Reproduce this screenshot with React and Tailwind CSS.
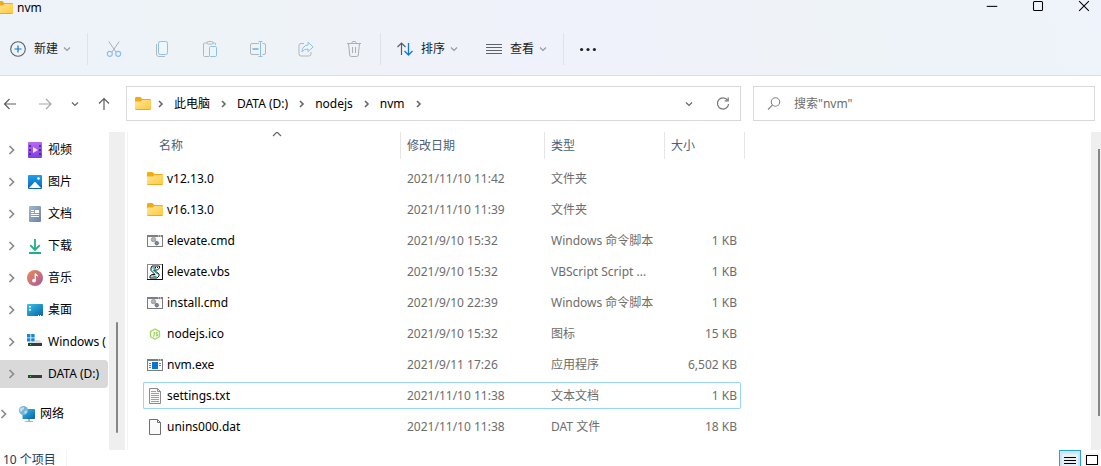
import React, { useState } from 'react';

const places = [
  { label: '视频', icon: VideoIcon },
  { label: '图片', icon: PictureIcon },
  { label: '文档', icon: DocumentIcon },
  { label: '下载', icon: DownloadIcon },
  { label: '音乐', icon: MusicIcon },
  { label: '桌面', icon: DesktopIcon },
  { label: 'Windows (', icon: WindowsDriveIcon },
  { label: 'DATA (D:)', icon: DriveIcon, active: true },
];

const files = [
  { name: 'v12.13.0', date: '2021/11/10 11:42', type: '文件夹', size: '', icon: FolderIcon },
  { name: 'v16.13.0', date: '2021/11/10 11:39', type: '文件夹', size: '', icon: FolderIcon },
  { name: 'elevate.cmd', date: '2021/9/10 15:32', type: 'Windows 命令脚本', size: '1 KB', icon: CmdIcon },
  { name: 'elevate.vbs', date: '2021/9/10 15:32', type: 'VBScript Script ...', size: '1 KB', icon: VbsIcon },
  { name: 'install.cmd', date: '2021/9/10 22:39', type: 'Windows 命令脚本', size: '1 KB', icon: CmdIcon },
  { name: 'nodejs.ico', date: '2021/9/10 15:32', type: '图标', size: '15 KB', icon: NodeIcon },
  { name: 'nvm.exe', date: '2021/9/11 17:26', type: '应用程序', size: '6,502 KB', icon: ExeIcon },
  { name: 'settings.txt', date: '2021/11/10 11:38', type: '文本文档', size: '1 KB', icon: TextFileIcon },
  { name: 'unins000.dat', date: '2021/11/10 11:38', type: 'DAT 文件', size: '18 KB', icon: BlankFileIcon },
];

const crumbs = ['此电脑', 'DATA (D:)', 'nodejs', 'nvm'];

function Icon({ children, className = 'size-4' }) {
  return (
    <svg viewBox="0 0 16 16" fill="none" aria-hidden="true" className={`block shrink-0 ${className}`}>
      {children}
    </svg>
  );
}

function FolderIcon() {
  return (
    <Icon>
      <defs>
        <linearGradient id="folder" x1="0" y1="0" x2="1" y2="1">
          <stop offset="0" stopColor="#ffe49a" />
          <stop offset="1" stopColor="#ffc937" />
        </linearGradient>
      </defs>
      <path d="M0 2.2Q0 1 1.2 1H5.4L7.4 3H14.8Q16 3 16 4.2V8H0Z" fill="#f3ab12" />
      <path d="M0 5.4H5.6L7.4 4H15Q16 4 16 5V12.8Q16 14 14.8 14H1.2Q0 14 0 12.8Z" fill="url(#folder)" />
      <path d="M.5 13.5H15.5" stroke="#e9ab25" />
    </Icon>
  );
}

function CmdIcon() {
  return (
    <Icon>
      <rect x=".5" y="2.5" width="15" height="11" fill="#fafafa" stroke="#7d7d7d" />
      <path d="M0 3H16" stroke="#7d7d7d" strokeWidth="2" />
      <path d="M11 3H12M13 3H14" stroke="#fff" />
      <circle cx="6.5" cy="6.5" r="1.8" stroke="#9aa1a8" strokeWidth="1.6" />
      <path d="M6.5 3.8V9.2M3.8 6.5H9.2" stroke="#aeb4ba" strokeWidth=".8" />
      <circle cx="9.8" cy="10.2" r="1.4" fill="#fff" stroke="#707880" strokeWidth="1.4" />
      <path d="M9.8 7.8V12.6M7.4 10.2H12.2" stroke="#707880" strokeWidth=".7" />
    </Icon>
  );
}

function VbsIcon() {
  return (
    <Icon>
      <path d="M0 0H16V16H0Z" fill="#8a8a8a" />
      <path d="M1 1H15V15H1Z" fill="#fff" />
      <path d="M0 15.5H15.5V0" stroke="#111" />
      <path d="M5 2H12.5V4L10.5 6H7L12 10V12L10 14H3V12L5 10.5H8L4 6.5V4Z" fill="#fff" stroke="#111" />
      <path d="M5.5 4H9M6 6L11 10M6.5 12.5H9.5" stroke="#15a5a5" strokeWidth="1.6" />
      <path d="M8 3.5H11M4.5 12H7" stroke="#111" strokeDasharray="1 1" />
    </Icon>
  );
}

function NodeIcon() {
  return (
    <Icon>
      <path d="M8 3L12.5 5.5V10.7L8 13.3L3.5 10.7V5.5Z" fill="#f3fae9" stroke="#a4d86a" strokeWidth="1.3" />
      <path d="M7.2 6V9.6L6 10.4M10.6 6.4H9.2V8H10.4V9.8H8.8" stroke="#8fcf4b" />
    </Icon>
  );
}

function ExeIcon() {
  return (
    <Icon>
      <rect x=".5" y="2.5" width="15" height="11" fill="#fafafa" stroke="#7d7d7d" />
      <path d="M0 3H16" stroke="#7d7d7d" strokeWidth="2" />
      <path d="M11 3H12M13 3H14" stroke="#fff" />
      <path d="M5 5H11V12H5Z" fill="#0a74d0" />
      <path d="M2 6.5H4M2 8.5H4M2 10.5H4M12 6.5H14M12 8.5H14" stroke="#7d7d7d" />
    </Icon>
  );
}

function TextFileIcon() {
  return (
    <Icon>
      <path d="M2.5.5H10.5L13.5 3.5V15.5H2.5Z" fill="#f8f8f8" stroke="#8b8b8b" />
      <path d="M10.5.5V3.5H13.5" stroke="#8b8b8b" />
      <path d="M4 3.5H9M4 5.5H12M4 7.5H12M4 9.5H12M4 11.5H12M4 13.5H12" stroke="#a0a0a0" />
    </Icon>
  );
}

function BlankFileIcon() {
  return (
    <Icon>
      <path d="M2.5.5H10.5L13.5 3.5V15.5H2.5Z" fill="#fafafa" stroke="#6f6f6f" />
      <path d="M10.5.5V3.5H13.5" stroke="#6f6f6f" />
    </Icon>
  );
}

function VideoIcon() {
  return (
    <Icon>
      <defs>
        <linearGradient id="video" x1="0" y1="0" x2="0" y2="1">
          <stop offset="0" stopColor="#b86af0" />
          <stop offset="1" stopColor="#7d3de0" />
        </linearGradient>
      </defs>
      <rect x="1" width="14" height="16" rx="1" fill="url(#video)" />
      <path d="M3 3V14M13 3V14" stroke="#4a1a96" strokeWidth="1.6" strokeDasharray="2 2" />
      <path d="M6 5L11 8L6 11Z" fill="#efe4fc" />
    </Icon>
  );
}

function PictureIcon() {
  return (
    <Icon>
      <defs>
        <linearGradient id="picture" x1="0" y1="0" x2="0" y2="1">
          <stop offset="0" stopColor="#1fa2ea" />
          <stop offset="1" stopColor="#0a64ba" />
        </linearGradient>
      </defs>
      <rect x="1" y="1" width="14" height="14" rx="1" fill="url(#picture)" />
      <path d="M2 14L7.4 8.3Q8 7.8 8.6 8.3L14 14Z" fill="#fff" />
      <circle cx="11.5" cy="4.5" r="1.3" fill="#fff" />
    </Icon>
  );
}

function DocumentIcon() {
  return (
    <Icon>
      <defs>
        <linearGradient id="document" x1="0" y1="0" x2="1" y2="1">
          <stop offset="0" stopColor="#a3b9cd" />
          <stop offset="1" stopColor="#6684a4" />
        </linearGradient>
      </defs>
      <rect x="2" width="12" height="16" rx="1" fill="url(#document)" />
      <path d="M4 4.5H7M4 6.5H7M4 8.5H12M4 10.5H12" stroke="#fff" />
      <path d="M8 4H12V7H8Z" fill="#fff" />
    </Icon>
  );
}

function DownloadIcon() {
  return (
    <Icon>
      <path d="M8 1V12M3.2 7.2L8 12L12.8 7.2M2 15H14" stroke="#1fb08b" strokeWidth="1.8" />
    </Icon>
  );
}

function MusicIcon() {
  return (
    <Icon>
      <defs>
        <linearGradient id="music" x1="0" y1="0" x2="1" y2="1">
          <stop offset="0" stopColor="#f08b56" />
          <stop offset="1" stopColor="#a2599f" />
        </linearGradient>
      </defs>
      <circle cx="8" cy="8" r="8" fill="url(#music)" />
      <circle cx="7" cy="10.6" r="1.9" fill="#fff" />
      <path d="M8.3 10.5V3.5Q8.8 5.4 10.8 6" stroke="#fff" strokeWidth="1.3" />
    </Icon>
  );
}

function DesktopIcon() {
  return (
    <Icon>
      <defs>
        <linearGradient id="desktop" x1="0" y1="0" x2="1" y2="1">
          <stop offset="0" stopColor="#37c5e8" />
          <stop offset="1" stopColor="#0b61a8" />
        </linearGradient>
      </defs>
      <rect y="2" width="16" height="12" rx="1" fill="url(#desktop)" />
      <path d="M3 4V5.5M3 7V8.5" stroke="#fff" strokeWidth="2" />
      <path d="M11 13.5H12M13 13.5H14" stroke="#fff" />
    </Icon>
  );
}

function DriveBody() {
  return (
    <>
      <path d="M3.5 6H12.5L15 9H1Z" fill="#dcdcdc" />
      <path d="M1 9H15V12H1Z" fill="#3b3b3b" />
      <path d="M3 10.5H4" stroke="#4fdc5b" />
    </>
  );
}

function WindowsDriveIcon() {
  return (
    <Icon>
      <DriveBody />
      <path d="M0 0H8V8H0Z" fill="#fff" />
      <path d="M0 0H3.4V3.4H0ZM4.2 0H7.6V3.4H4.2ZM0 4.2H3.4V7.6H0ZM4.2 4.2H7.6V7.6H4.2Z" fill="#1487dc" />
    </Icon>
  );
}

function DriveIcon() {
  return (
    <Icon>
      <DriveBody />
    </Icon>
  );
}

function NetworkIcon() {
  return (
    <Icon>
      <defs>
        <linearGradient id="network" x1="0" y1="0" x2="1" y2="1">
          <stop offset="0" stopColor="#34c3e8" />
          <stop offset="1" stopColor="#0d5fa6" />
        </linearGradient>
      </defs>
      <path d="M9 12H11V15H9Z" fill="#9fb2c0" />
      <path d="M6 15.5H14" stroke="#a9b6c0" />
      <rect x="3.5" y="3" width="12.5" height="10" rx=".8" fill="url(#network)" />
      <circle cx="4.5" cy="4.5" r="4.5" fill="#75b5d6" />
      <path d="M1 3Q3 .5 5 1.5Q5.5 3.5 3.5 4Q3 6 1.2 5.6ZM5.5 5L8 4.4Q8 7 5.6 8Z" fill="#c6dfea" />
    </Icon>
  );
}

function Chevron({ dir = 'right', className = 'text-[#666666]' }) {
  const paths = {
    right: 'M6 5L9 8L6 11',
    down: 'M5 6.5L8 9.5L11 6.5',
    up: 'M4 10L8 6L12 10',
  };
  return (
    <Icon className={`size-4 ${className}`}>
      <path d={paths[dir]} stroke="currentColor" strokeWidth={dir === 'right' ? 1.6 : 1.2} />
    </Icon>
  );
}

function TreeArrow({ className = '' }) {
  return (
    <Icon className={`size-4 text-[#8c8c8c] ${className}`}>
      <path d="M5.5 4L9.5 8L5.5 12" stroke="currentColor" strokeWidth="1.7" />
    </Icon>
  );
}

const tools = [
  {
    label: '剪切',
    art: (
      <>
        <path d="M2.8.5L10 11M13.2.5L6 11" stroke="#a9adb3" />
        <circle cx="3.8" cy="12.8" r="2.5" stroke="#8dc0ea" strokeWidth="1.2" />
        <circle cx="12.2" cy="12.8" r="2.5" stroke="#8dc0ea" strokeWidth="1.2" />
      </>
    ),
  },
  {
    label: '复制',
    art: (
      <>
        <path d="M2.5 3V13Q2.5 15.5 5 15.5H11" stroke="#b3b6bb" />
        <rect x="4.5" y=".5" width="9" height="13" rx="1.8" fill="#eef6fd" stroke="#8dc0ea" />
      </>
    ),
  },
  {
    label: '粘贴',
    art: (
      <>
        <path d="M5 2H2.5Q1.5 2 1.5 3V14.5Q1.5 15.5 2.5 15.5H7M11 2H12.5Q13.5 2 13.5 3V4" stroke="#b3b6bb" />
        <rect x="5" y=".5" width="6" height="2.6" rx="1.2" stroke="#b3b6bb" />
        <rect x="7.5" y="5.5" width="7" height="10" rx="1.2" fill="#eef6fd" stroke="#8dc0ea" />
      </>
    ),
  },
  {
    label: '重命名',
    art: (
      <>
        <path d="M9 2.5H2Q.5 2.5 .5 4V12Q.5 13.5 2 13.5H9M12.5 2.5H14Q15.5 2.5 15.5 4V12Q15.5 13.5 14 13.5H12.5" stroke="#b3b6bb" />
        <path d="M8.5.5H12.5M8.5 15.5H12.5M10.5.5V15.5" stroke="#8dc0ea" />
        <path d="M2.5 8H8.5" stroke="#8dc0ea" strokeWidth="2" />
      </>
    ),
  },
  {
    label: '共享',
    art: (
      <>
        <path d="M6 2.5H3Q1 2.5 1 4.5V13Q1 15 3 15H11Q13 15 13 13V11" stroke="#b3b6bb" />
        <path d="M10 1.2L15.2 6L10 10.6V8Q6 7.8 4 11Q4.2 4.6 10 4Z" fill="#eef6fd" stroke="#8dc0ea" strokeLinejoin="round" />
      </>
    ),
  },
  {
    label: '删除',
    art: (
      <path
        d="M1 2.5H15M6 2.5V1.5Q6 .5 7 .5H9Q10 .5 10 1.5V2.5M2.5 2.5L3.7 14Q3.9 15.5 5.2 15.5H10.8Q12.1 15.5 12.3 14L13.5 2.5M6.5 6V12M9.5 6V12"
        stroke="#abaeb3"
      />
    ),
  },
];

function MenuButton({ label, children }) {
  return (
    <button type="button" className="flex h-9 items-center">
      {children}
      <span className="ml-2">{label}</span>
      <Chevron dir="down" className="ml-px text-[#9599a0]" />
    </button>
  );
}

function Divider() {
  return <span className="h-8 w-px shrink-0 bg-[#dfe2e7]" />;
}

function CommandBar() {
  return (
    <div className="flex h-[53px] items-center pl-2.5 text-[#1b1b1b]">
      <MenuButton label="新建">
        <Icon className="size-4">
          <circle cx="8" cy="8" r="7.3" stroke="#5c5f63" strokeWidth="1.1" />
          <path d="M8 4.5V11.5M4.5 8H11.5" stroke="#0f7bd0" strokeWidth="1.2" />
        </Icon>
      </MenuButton>
      <span className="w-3" />
      <Divider />
      <div className="flex px-0.5">
        {tools.map(tool => (
          <button key={tool.label} type="button" disabled aria-label={tool.label} className="flex h-9 w-12 items-center justify-center">
            <Icon>{tool.art}</Icon>
          </button>
        ))}
      </div>
      <Divider />
      <div className="flex gap-6 pr-3 pl-4">
        <MenuButton label="排序">
          <Icon>
            <path d="M4.5 14V2M.5 6L4.5 2L8.5 6" stroke="#5a5d61" strokeWidth="1.2" />
            <path d="M11.5 2V14M7.5 10L11.5 14L15.5 10" stroke="#0f7bd6" strokeWidth="1.3" />
          </Icon>
        </MenuButton>
        <MenuButton label="查看">
          <Icon>
            <path d="M0 3.5H16M0 6.5H16M0 9.5H16M0 12.5H16" stroke="#5f6267" />
          </Icon>
        </MenuButton>
      </div>
      <Divider />
      <button type="button" aria-label="更多" className="flex h-9 w-12 items-center justify-center">
        <Icon>
          <circle cx="1.6" cy="8.5" r="1.6" fill="#222" />
          <circle cx="8" cy="8.5" r="1.6" fill="#222" />
          <circle cx="14.4" cy="8.5" r="1.6" fill="#222" />
        </Icon>
      </button>
    </div>
  );
}

function TitleBar() {
  return (
    <div className="flex h-[22px] items-start justify-between">
      <div className="-ml-[3px] flex items-center gap-1">
        <FolderIcon />
        <h1 className="leading-[14px] text-black">nvm</h1>
      </div>
      <div className="-mr-1.5 flex text-black">
        <button type="button" aria-label="最小化" className="flex h-3 w-[46px] items-center justify-center">
          <Icon className="size-3">
            <path d="M1 8.5H15" stroke="currentColor" strokeWidth="1.4" />
          </Icon>
        </button>
        <button type="button" aria-label="最大化" className="flex h-3 w-[46px] items-center justify-center">
          <Icon className="size-3">
            <rect x="2" y="2" width="12" height="12" rx="1.4" stroke="currentColor" strokeWidth="1.4" />
          </Icon>
        </button>
        <button type="button" aria-label="关闭" className="flex h-3 w-[46px] items-center justify-center">
          <Icon className="size-3">
            <path d="M1.5 1.5L14.5 14.5M14.5 1.5L1.5 14.5" stroke="currentColor" strokeWidth="1.4" />
          </Icon>
        </button>
      </div>
    </div>
  );
}

function AddressRow() {
  const [query, setQuery] = useState('');

  return (
    <div className="flex items-center pt-2.5 pr-1.5 pb-[11px]">
      <div className="flex w-[126px] shrink-0 items-center text-[#5f5f5f]">
        <button type="button" aria-label="后退" className="ml-0.5 p-0">
          <Icon><path d="M14 8H2.5M7.5 3L2.5 8L7.5 13" stroke="currentColor" strokeWidth="1.2" /></Icon>
        </button>
        <button type="button" disabled aria-label="前进" className="ml-5 text-[#a8a8a8]">
          <Icon><path d="M1 8H13M8 3L13 8L8 13" stroke="currentColor" strokeWidth="1.2" /></Icon>
        </button>
        <button type="button" aria-label="最近浏览的位置" className="ml-[13px]">
          <Chevron dir="down" />
        </button>
        <button type="button" aria-label="上一级" className="ml-[13px]">
          <Icon><path d="M8 14V2.5M3 7.5L8 2.5L13 7.5" stroke="currentColor" strokeWidth="1.2" /></Icon>
        </button>
      </div>
      <div className="grid min-w-0 flex-1 grid-cols-[minmax(0,615fr)_minmax(0,342fr)] gap-3">
        <div className="flex h-[35px] items-center border border-[#d9d9d9] bg-white pl-2">
          <FolderIcon />
          <Chevron className="ml-0.5 text-[#666666]" />
          <nav aria-label="地址" className="flex items-center">
            {crumbs.map(crumb => (
              <span key={crumb} className="flex items-center">
                <a href="#" className="ml-[5px] text-black">{crumb}</a>
                <Chevron className="ml-1.5 text-[#666666]" />
              </span>
            ))}
          </nav>
          <button type="button" aria-label="以前的位置" className="ml-auto">
            <Chevron dir="down" />
          </button>
          <button type="button" aria-label="刷新" className="mr-[9px] ml-[18px]">
            <Icon>
              <path d="M12.6 4.2A5.6 5.6 0 1 0 13.6 8" stroke="#777" strokeWidth="1.2" />
              <path d="M13.2 1.5V4.8H9.8" stroke="#777" strokeWidth="1.2" />
            </Icon>
          </button>
        </div>
        <label className="flex h-[35px] items-center border border-[#d9d9d9] bg-white pl-3">
          <Icon>
            <circle cx="9.5" cy="6" r="4.2" stroke="#858585" strokeWidth="1.1" />
            <path d="M6.5 9L2 13.5" stroke="#858585" strokeWidth="1.1" />
          </Icon>
          <input
            type="search"
            aria-label="搜索"
            placeholder={'搜索"nvm"'}
            value={query}
            onChange={e => setQuery(e.target.value)}
            className="ml-3 min-w-0 flex-1 outline-none placeholder:text-[#6d6d6d]"
          />
        </label>
      </div>
    </div>
  );
}

function Sidebar() {
  return (
    <div className="flex w-32 shrink-0 border-r border-[#f4f4f4] pr-0.5">
      <nav aria-label="导航窗格" className="w-[109px] overflow-hidden pt-1 pr-px">
        <ul className="flex flex-col gap-1">
          {places.map(place => (
            <li key={place.label}>
              <a
                href="#"
                className={`flex h-7 items-center rounded-r-sm pl-1 whitespace-nowrap text-black ${place.active ? 'bg-[#d9d9d9]' : ''}`}
              >
                <TreeArrow />
                <span className="mr-[5px] ml-[7px]"><place.icon /></span>
                {place.label}
              </a>
            </li>
          ))}
          <li className="mt-2">
            <a href="#" className="flex h-7 items-center text-black">
              <TreeArrow className="-ml-1" />
              <span className="mr-[5px] ml-[7px]"><NetworkIcon /></span>
              网络
            </a>
          </li>
        </ul>
      </nav>
      <div className="flex w-4 flex-col bg-[#efefef] pt-[190px] pb-[17px]">
        <span className="mx-auto w-0.5 flex-1 rounded-full bg-[#868686]" />
      </div>
    </div>
  );
}

function FileTable() {
  const headCell = 'p-0 text-left align-top font-normal';
  const headLabel = 'flex h-[27px] items-center border-l border-[#e5e5e5] pl-1.5';

  return (
    <table className="w-[602px] table-fixed border-separate border-spacing-x-0 border-spacing-y-1 text-[#6d6d6d]">
      <colgroup>
        <col className="w-[257px]" />
        <col className="w-[144px]" />
        <col className="w-[120px]" />
        <col className="w-[77px]" />
        <col className="w-1" />
      </colgroup>
      <thead className="text-[#4c607a]">
        <tr className="h-[29px]">
          <th scope="col" aria-sort="ascending" className={headCell}>
            <div className="relative flex h-[27px] items-center pl-4">
              名称
              <span className="absolute -top-1.5 left-[126px]">
                <Chevron dir="up" />
              </span>
            </div>
          </th>
          <th scope="col" className={headCell}><div className={headLabel}>修改日期</div></th>
          <th scope="col" className={headCell}><div className={headLabel}>类型</div></th>
          <th scope="col" colSpan={2} className={headCell}>
            <div className={`${headLabel} border-r`}>大小</div>
          </th>
        </tr>
      </thead>
      <tbody>
        {files.map(file => {
          const edge = file.name === 'settings.txt' ? 'border-[#99d1ff]' : 'border-transparent';
          return (
            <tr key={file.name} className="h-[27px] whitespace-nowrap">
              <td className={`rounded-l-xs border-y border-l p-0 pl-[3px] ${edge}`}>
                <div className="flex items-center gap-1 text-black">
                  <file.icon />
                  {file.name}
                </div>
              </td>
              <td className={`border-y p-0 pl-[7px] ${edge}`}>{file.date}</td>
              <td className={`border-y p-0 pl-[7px] ${edge}`}>{file.type}</td>
              <td className={`rounded-r-xs border-y border-r p-0 pr-[3px] text-right ${edge}`}>{file.size}</td>
              <td className="p-0" />
            </tr>
          );
        })}
      </tbody>
    </table>
  );
}

function StatusBar() {
  return (
    <footer className="flex h-4 shrink-0 items-start justify-between overflow-hidden text-[#1e395b]">
      <p className="border-r border-[#f4f4f4] pt-1 pr-2.5 pl-[3px] leading-3">10 个项目</p>
      <div className="flex items-start pr-px">
        <button type="button" aria-label="详细信息" className="flex h-[22px] w-[22px] justify-center border border-[#26a0da] bg-[#cbe8f6] pt-0.5">
          <Icon>
            <path d="M0 1H16V16H0Z" fill="#e6f0f5" />
            <path d="M2 4.5H14M2 7.5H14M2 10.5H14" stroke="#000" />
          </Icon>
        </button>
        <button type="button" aria-label="大图标" className="ml-[3px] flex h-[22px] w-4 justify-center pt-[3px]">
          <Icon>
            <path d="M0 0H16V16H0Z" fill="#f4f4f4" />
            <rect x="2.5" y="2.5" width="11" height="9" fill="#fff" stroke="#000" />
          </Icon>
        </button>
      </div>
    </footer>
  );
}

export default function App() {
  return (
    <div className="flex h-screen flex-col overflow-hidden bg-white font-['Noto_Sans','Noto_Sans_CJK_SC',sans-serif] text-xs">
      <header className="shrink-0 border-b border-[#dcdfe5] bg-[linear-gradient(80deg,#edf3f8_0%,#eff3f8_30%,#eff2fb_55%,#eff3f7_72%,#eef3fa_85%,#eff3fb_100%)]">
        <TitleBar />
        <CommandBar />
      </header>
      <AddressRow />
      <main className="flex min-h-0 flex-1">
        <Sidebar />
        <section aria-label="文件" className="min-w-0 flex-1 overflow-hidden pl-[15px]">
          <div className="-mt-1">
            <FileTable />
          </div>
        </section>
        <div className="flex w-2.5 flex-col bg-[#efefef] pt-[17px] pr-px pb-[34px]">
          <span className="ml-auto w-0.5 flex-1 bg-[#868686]" />
        </div>
      </main>
      <StatusBar />
    </div>
  );
}
